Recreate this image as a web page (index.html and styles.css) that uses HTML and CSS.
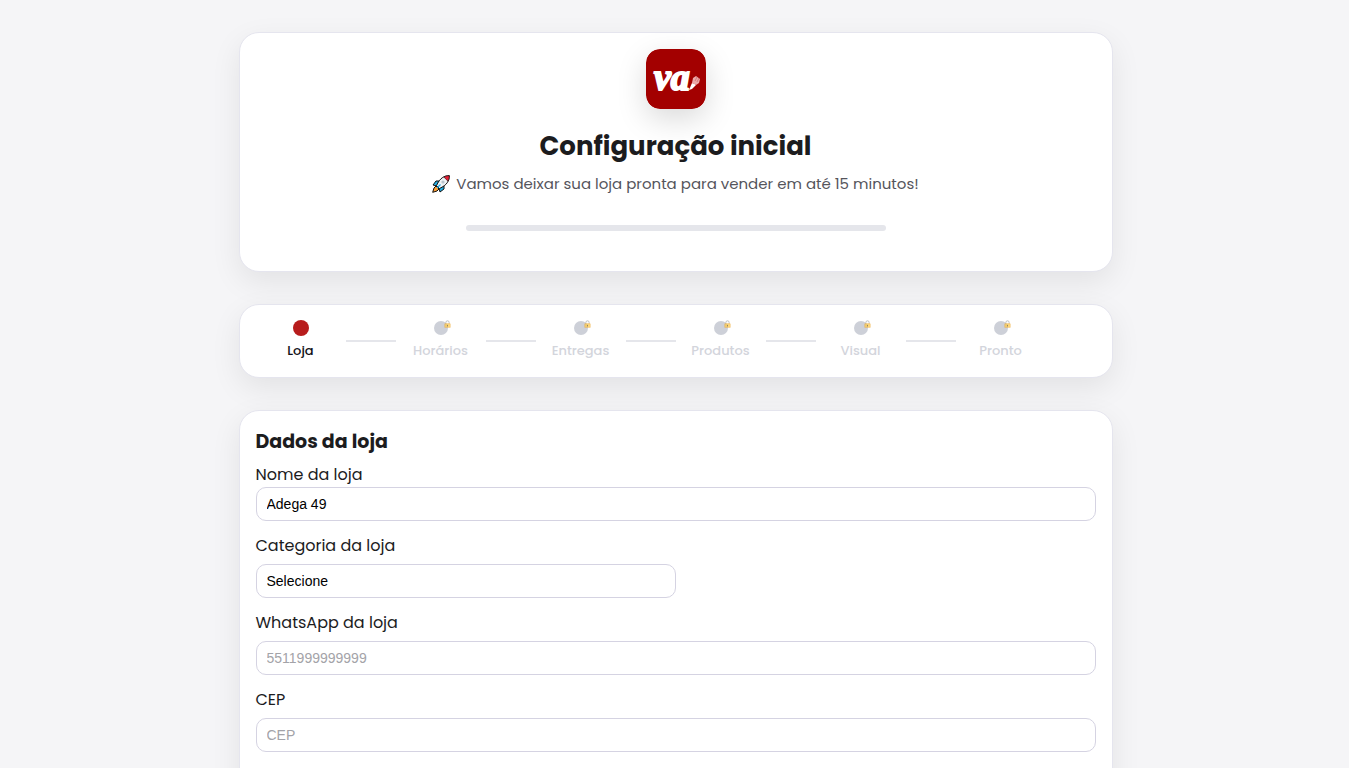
FILE: index.html
```html
<!DOCTYPE html>
<html lang="pt-BR">
<head>
<meta charset="UTF-8" />
<meta name="viewport" content="width=device-width, initial-scale=1" />
<title>Configuração inicial</title>
<link rel="stylesheet" href="styles.css">
</head>
<body>
<!-- Ícones reutilizados -->
<svg class="sprite" aria-hidden="true">
  <symbol id="lock" viewBox="0 0 8 10">
    <path d="M2 5V3a2 2 0 0 1 4 0v2" fill="none" stroke="#8b929c" stroke-width="1" />
    <rect x="0.5" y="4.5" width="7" height="5" rx="0.5" fill="#ffc83d" stroke="#e8a33d" stroke-width="0.6" />
    <path d="M4 6v2" stroke="#4a4035" stroke-width="1" />
  </symbol>
</svg>

<main class="container">
  <!-- Cabeçalho -->
  <header class="card hero">
    <svg class="logo" viewBox="0 0 60 60" role="img" aria-label="va">
      <rect width="60" height="60" rx="14" fill="#a30000" />
      <text class="logo-text" x="8" y="41">va</text>
      <path d="M43 41l3-7 3 1 1 1-4 4z" fill="#fff" />
      <path d="M46 34l1-5 3-2 4 3-1 4-3 2z" fill="#eba9a9" />
      <path d="M49 32l2-4M51 33l2-4" stroke="#c25c5c" stroke-width="0.6" />
    </svg>
    <h1>Configuração inicial</h1>
    <p class="subtitle">
      <svg class="rocket" viewBox="0 0 18 18" aria-hidden="true">
        <path d="M4 11l-2 2-1.300 4.300L5 16l2-2z" fill="#ff9d2e" stroke="#111" />
        <path d="M7 6H4L1 10l4 1zM12 11v3l-4 3-1-4z" fill="#20aee5" stroke="#111" />
        <path d="M17.300.700C12 .700 8 3 4.500 10.500l3 3C15 10 17.300 6 17.300.700z" fill="#eef2f5" stroke="#111" />
        <path d="M17.300.700c-2 0-4 .300-5.500 1.300l4.200 4.200c1-1.500 1.300-3.500 1.300-5.500z" fill="#e81f35" stroke="#111" stroke-width="0.600" />
        <circle cx="11" cy="7" r="1.600" fill="#b9c3cc" />
        <path d="M5 13L8.500 9.500" stroke="#20aee5" stroke-width="1.200" />
      </svg>
      Vamos deixar sua loja pronta para vender em até 15 minutos!
    </p>
    <div class="progress"></div>
  </header>

  <!-- Etapas -->
  <nav class="card steps" aria-label="Etapas">
    <div class="step active"><span class="dot"></span>Loja</div>
    <div class="line"></div>
    <div class="step"><span class="dot"><svg class="lock"><use href="#lock" /></svg></span>Horários</div>
    <div class="line"></div>
    <div class="step"><span class="dot"><svg class="lock"><use href="#lock" /></svg></span>Entregas</div>
    <div class="line"></div>
    <div class="step"><span class="dot"><svg class="lock"><use href="#lock" /></svg></span>Produtos</div>
    <div class="line"></div>
    <div class="step"><span class="dot"><svg class="lock"><use href="#lock" /></svg></span>Visual</div>
    <div class="line"></div>
    <div class="step"><span class="dot"><svg class="lock"><use href="#lock" /></svg></span>Pronto</div>
  </nav>

  <!-- Formulário da loja -->
  <form class="card store-form">
    <h2>Dados da loja</h2>
    <div class="field compact">
      <label for="nome">Nome da loja</label>
      <input type="text" id="nome" name="nome" value="Adega 49" />
    </div>
    <div class="field">
      <label for="categoria">Categoria da loja</label>
      <select id="categoria" name="categoria">
        <option>Selecione</option>
      </select>
    </div>
    <div class="field">
      <label for="whatsapp">WhatsApp da loja</label>
      <input type="tel" id="whatsapp" name="whatsapp" placeholder="5511999999999" />
    </div>
    <div class="field">
      <label for="cep">CEP</label>
      <input type="text" id="cep" name="cep" placeholder="CEP" />
    </div>
  </form>
</main>
</body>
</html>
```
FILE: styles.css
```css
:root {
  --bg: #f5f5f7;
  --text: #1c1c1e;
  --muted: #55555c;
  --border: #e5e5ee;
  --input-border: #d5d3e2;
  --line: #e5e6eb;
  --primary: #b71c1c;
}
* {
  box-sizing: border-box;
}
body {
  margin: 0;
  padding: 32px 16px 32px 18px;
  font-family: Poppins, Inter, sans-serif;
  font-size: 16px;
  line-height: 24px;
  background: var(--bg);
  color: var(--text);
}
.sprite {
  display: none;
}
.container {
  display: flex;
  flex-direction: column;
  gap: 32px;
  max-width: 874px;
  margin: 0 auto;
}
.card {
  padding: 16px;
  background: white;
  border: 1px solid var(--border);
  border-radius: 20px;
  box-shadow: 0 10px 30px rgb(0 0 0 / 0.08);
}
.hero {
  display: flex;
  flex-direction: column;
  align-items: center;
  padding-bottom: 40px;
}
.logo {
  width: 60px;
  height: 60px;
  border-radius: 14px;
  box-shadow: 0 10px 30px rgb(0 0 0 / 0.15);
}
.logo-text {
  font-family: "Liberation Serif", serif;
  font-size: 38px;
  font-weight: bold;
  font-style: italic;
  fill: white;
  stroke: white;
  stroke-width: 2px;
}
h1 {
  margin: 16px 0 0;
  font-size: 26px;
  line-height: 42px;
  font-weight: 700;
}
.subtitle {
  display: flex;
  align-items: center;
  gap: 6px;
  margin: 5px 0 0;
  font-size: 15px;
  color: var(--muted);
}
.rocket {
  width: 18px;
  height: 18px;
}
.progress {
  width: 100%;
  max-width: 420px;
  height: 6px;
  margin-top: 29px;
  border-radius: 6px;
  background: var(--line);
}
.steps {
  display: flex;
  align-items: center;
  padding: 15px 16px;
}
.step {
  display: flex;
  flex-direction: column;
  align-items: center;
  width: 90px;
  height: 42px;
  font-size: 13px;
  line-height: 20px;
  font-weight: 500;
  color: #d3d5dc;
}
.step.active {
  color: #111118;
}
.dot {
  position: relative;
  width: 14px;
  height: 14px;
  margin: 1px 0 6px;
  border-radius: 50%;
  background: #cdd0d8;
}
.step.active .dot {
  width: 16px;
  height: 16px;
  margin: 0 0 5px;
  background: var(--primary);
}
.lock {
  position: absolute;
  top: -1px;
  right: -3px;
  width: 7px;
  height: 8px;
  opacity: 0.7;
}
.line {
  width: 50px;
  height: 2px;
  background: var(--line);
}
.store-form {
  padding-bottom: 64px;
}
h2 {
  margin: 0 0 6px;
  font-size: 19px;
  line-height: 30px;
  font-weight: 700;
}
.field {
  display: flex;
  flex-direction: column;
  gap: 6px;
  margin-bottom: 13px;
}
.field.compact {
  gap: 0;
}
input,
select {
  width: 100%;
  height: 34px;
  padding: 0 10px;
  font-family: "Liberation Sans", Arial, sans-serif;
  font-size: 14px;
  color: black;
  background: white;
  border: 1px solid var(--input-border);
  border-radius: 10px;
}
select {
  max-width: 420px;
  appearance: none;
}
input::placeholder {
  color: #a3a3a8;
}
input:focus,
select:focus {
  outline: none;
  border-color: var(--primary);
}
```
